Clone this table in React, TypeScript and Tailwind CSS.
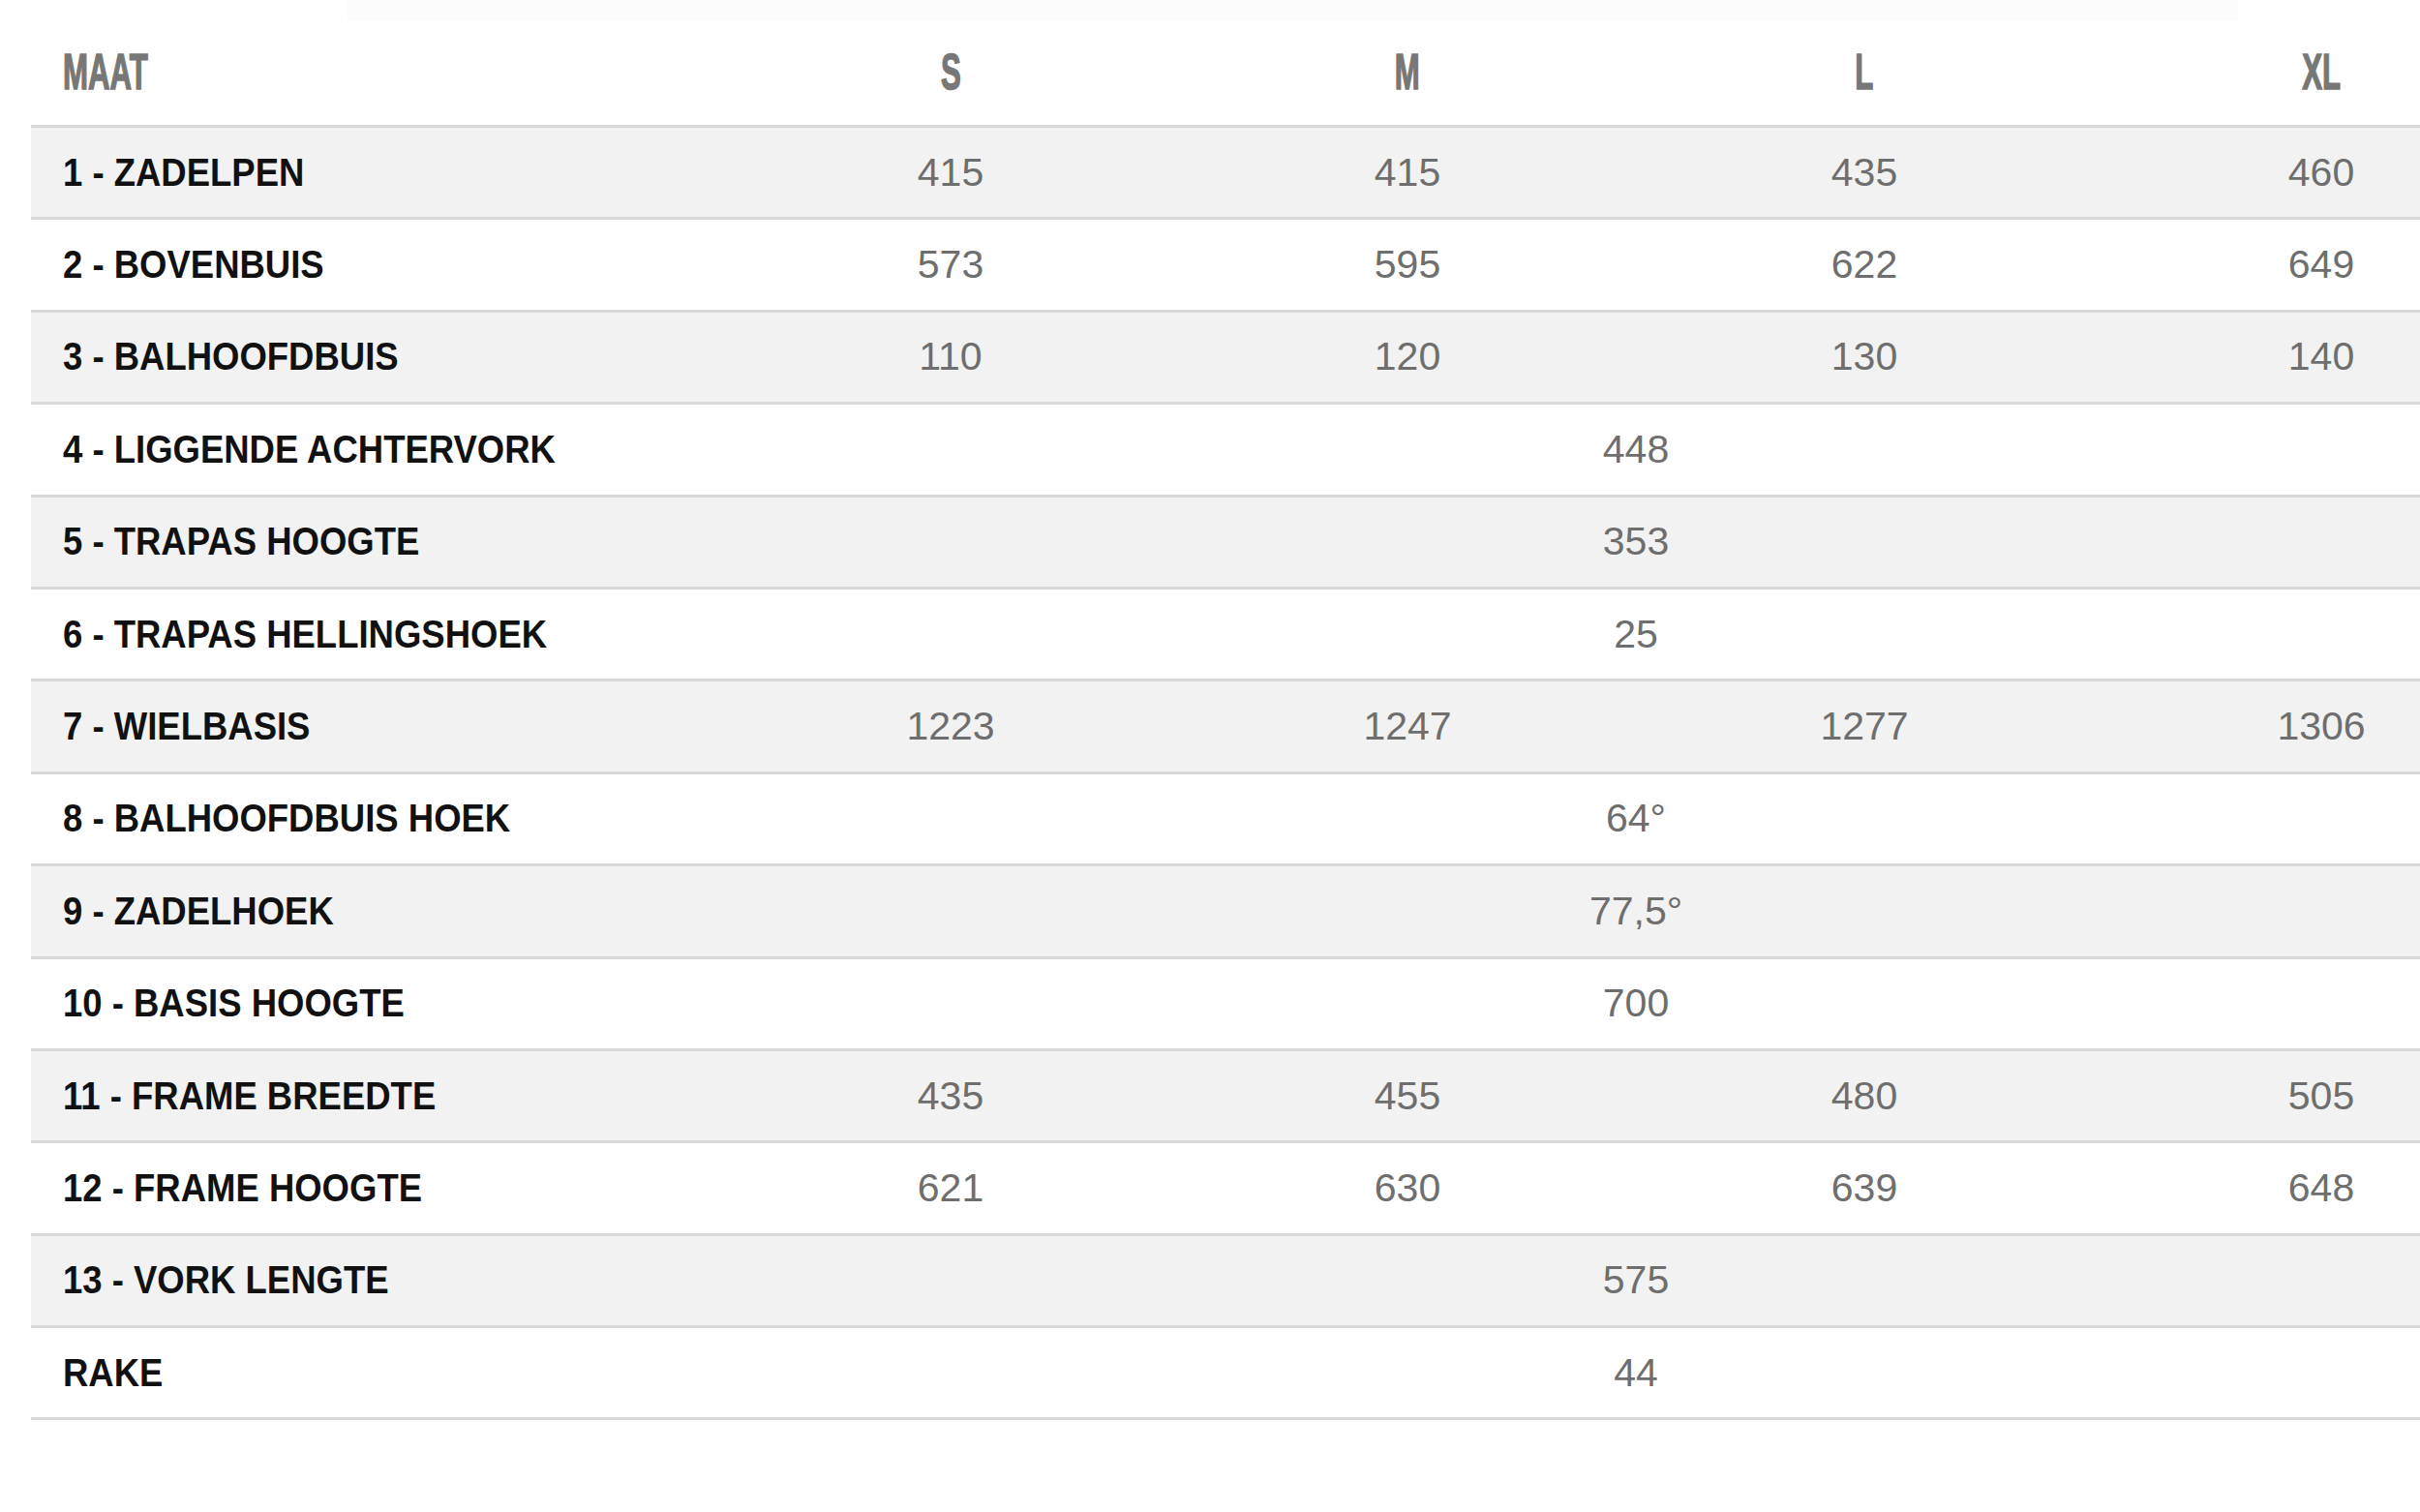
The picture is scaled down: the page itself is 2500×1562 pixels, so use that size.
import React from "react";

type Row = [string, string[] | string];

const rows: Row[] = [
  ["1 - ZADELPEN", ["415", "415", "435", "460"]],
  ["2 - BOVENBUIS", ["573", "595", "622", "649"]],
  ["3 - BALHOOFDBUIS", ["110", "120", "130", "140"]],
  ["4 - LIGGENDE ACHTERVORK", "448"],
  ["5 - TRAPAS HOOGTE", "353"],
  ["6 - TRAPAS HELLINGSHOEK", "25"],
  ["7 - WIELBASIS", ["1223", "1247", "1277", "1306"]],
  ["8 - BALHOOFDBUIS HOEK", "64°"],
  ["9 - ZADELHOEK", "77,5°"],
  ["10 - BASIS HOOGTE", "700"],
  ["11 - FRAME BREEDTE", ["435", "455", "480", "505"]],
  ["12 - FRAME HOOGTE", ["621", "630", "639", "648"]],
  ["13 - VORK LENGTE", "575"],
  ["RAKE", "44"],
];

const sizes = ["S", "M", "L", "XL"];

function HeadText({ children }: { children: React.ReactNode }) {
  return (
    <span className="inline-block scale-x-[0.6] font-bold text-[52px] leading-none text-[#777777] [-webkit-text-stroke:1.5px_#777777]">
      {children}
    </span>
  );
}

export default function App() {
  return (
    <div className="relative w-[2500px] h-[1562px] overflow-hidden bg-white [font-family:'Liberation_Sans',Arial,sans-serif]">
      <div className="absolute top-0 left-[359px] w-[1953px] h-[22px] bg-[#fcfcfc]" />
      <div className="relative ml-8 w-[2602px]">
        <div className="grid grid-cols-[714px_repeat(4,472px)] h-[132px] border-b-[3px] border-[#d9d9d9] items-center pt-[18px]">
          <div className="pl-[33px]">
            <span className="inline-block origin-left scale-x-[0.6] font-bold text-[52px] leading-none text-[#777777] [-webkit-text-stroke:1.5px_#777777]">
              MAAT
            </span>
          </div>
          {sizes.map((s) => (
            <div key={s} className="text-center">
              <HeadText>{s}</HeadText>
            </div>
          ))}
        </div>
        {rows.map(([label, vals], i) => (
          <div
            key={label}
            className={`grid grid-cols-[714px_repeat(4,472px)] h-[95.4px] border-b-[3px] border-[#d9d9d9] items-center ${
              i % 2 === 0 ? "bg-[#f2f2f2]" : "bg-white"
            }`}
          >
            <div className="pl-[33px] whitespace-nowrap">
              <span className="inline-block origin-left scale-x-[0.89] font-bold text-[41px] leading-none text-[#111111]">
                {label}
              </span>
            </div>
            {Array.isArray(vals) ? (
              vals.map((v, j) => (
                <div key={j} className="text-center text-[41px] leading-none text-[#6e6e6e]">
                  {v}
                </div>
              ))
            ) : (
              <div className="col-span-4 text-center text-[41px] leading-none text-[#6e6e6e]">
                {vals}
              </div>
            )}
          </div>
        ))}
      </div>
    </div>
  );
}
